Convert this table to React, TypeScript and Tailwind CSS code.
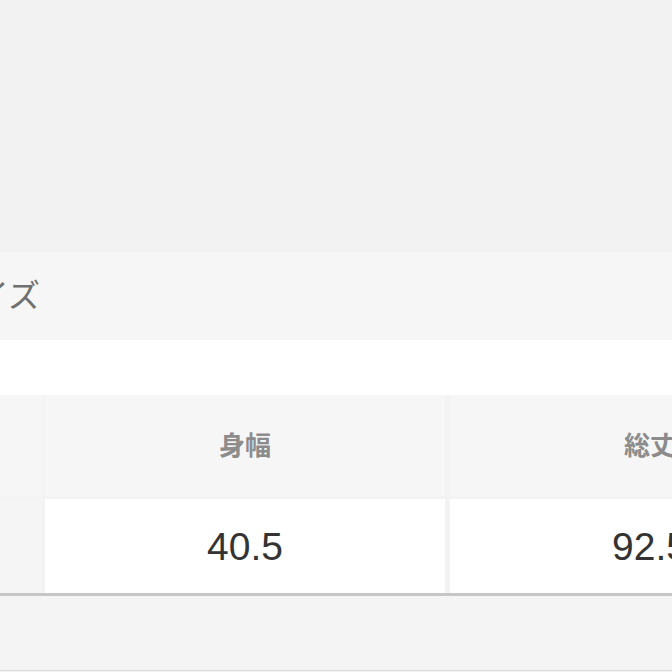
import React from "react";

const jp = { fontFamily: '"Liberation Sans", "Noto Sans CJK JP", sans-serif' };

export default function App() {
  return (
    <div className="w-[672px] h-[672px] overflow-hidden bg-[#f4f4f4] flex flex-col" style={jp}>
      <div className="h-[252px] shrink-0 bg-[#f2f2f2]" />
      <div className="h-[88px] shrink-0 bg-[#f6f6f6] flex items-center overflow-hidden">
        <span className="ml-[-55px] text-[32px] leading-none text-[#707070] whitespace-nowrap">サイズ</span>
      </div>
      <div className="h-[55px] shrink-0 bg-white" />
      <div className="h-[198px] shrink-0 bg-[#f3f3f3] overflow-hidden">
        <div className="flex flex-col gap-[3px] w-[900px] h-full">
          <div className="flex gap-[3px] h-[101px]">
            <div className="w-[42px] shrink-0 bg-[#f6f6f6]" />
            <div className="w-[400px] shrink-0 bg-[#f6f6f6] flex items-center justify-center">
              <span className="text-[26px] font-bold text-[#8c8c8c] leading-none">身幅</span>
            </div>
            <div className="w-[400px] shrink-0 ml-[2px] bg-[#f6f6f6] flex items-center justify-center">
              <span className="text-[26px] font-bold text-[#8c8c8c] leading-none">総丈</span>
            </div>
          </div>
          <div className="flex gap-[3px] flex-1">
            <div className="w-[42px] shrink-0 bg-[#f5f5f5]" />
            <div className="w-[400px] shrink-0 bg-white flex items-center justify-center">
              <span className="text-[39px] text-[#333333] leading-none">40.5</span>
            </div>
            <div className="w-[400px] shrink-0 ml-[2px] bg-white flex items-center justify-center">
              <span className="text-[39px] text-[#333333] leading-none">92.5</span>
            </div>
          </div>
        </div>
      </div>
      <div className="h-[3px] shrink-0 bg-[#c6c6c6]" />
      <div className="h-[74px] shrink-0 bg-[#f4f4f4]" />
      <div className="h-[1px] shrink-0 bg-[#dcdcdc]" />
      <div className="flex-1 bg-[#f4f4f4]" />
    </div>
  );
}
